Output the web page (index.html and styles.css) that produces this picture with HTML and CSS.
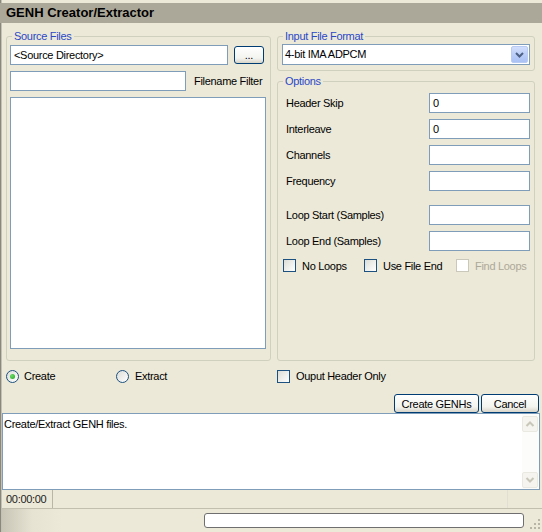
FILE: index.html
```html
<!DOCTYPE html>
<html>
<head>
<meta charset="utf-8">
<title>GENH Creator/Extractor</title>
<link rel="stylesheet" href="styles.css">
</head>
<body>
<div class="window">
  <div class="topstrip"></div>
  <div class="titlebar">GENH Creator/Extractor</div>

  <div class="main">
    <fieldset class="group src">
      <legend>Source Files</legend>
      <div class="src-body">
        <div class="row r1">
          <div class="textbox dir">&lt;Source Directory&gt;</div>
          <div class="btn browse">...</div>
        </div>
        <div class="row r2">
          <div class="textbox filter"></div>
          <span class="lbl">Filename Filter</span>
        </div>
        <div class="listbox"></div>
      </div>
    </fieldset>

    <div class="rightcol">
      <fieldset class="group fmt">
        <legend>Input File Format</legend>
        <div class="fmt-body">
          <div class="combo">
            <span class="combo-text">4-bit IMA ADPCM</span>
            <span class="combo-btn">
              <svg width="15" height="15" viewBox="0 0 15 15"><path d="M4 6 L7.5 9.5 L11 6" fill="none" stroke="#4D6185" stroke-width="2"/></svg>
            </span>
          </div>
        </div>
      </fieldset>

      <fieldset class="group opts">
        <legend>Options</legend>
        <div class="opts-body">
          <div class="orow"><span>Header Skip</span><div class="textbox num">0</div></div>
          <div class="orow"><span>Interleave</span><div class="textbox num">0</div></div>
          <div class="orow"><span>Channels</span><div class="textbox num"></div></div>
          <div class="orow"><span>Frequency</span><div class="textbox num"></div></div>
          <div class="orow sep"><span>Loop Start (Samples)</span><div class="textbox num"></div></div>
          <div class="orow"><span>Loop End (Samples)</span><div class="textbox num"></div></div>
          <div class="checks">
            <div class="citem c1"><span class="chk"></span><span>No Loops</span></div>
            <div class="citem c2"><span class="chk"></span><span>Use File End</span></div>
            <div class="citem c3 disabled"><span class="chk off"></span><span>Find Loops</span></div>
          </div>
        </div>
      </fieldset>
    </div>
  </div>

  <div class="moderow">
    <div class="ritem create"><span class="radio on"></span><span>Create</span></div>
    <div class="ritem extract"><span class="radio"></span><span>Extract</span></div>
    <div class="ritem header"><span class="chk"></span><span>Ouput Header Only</span></div>
  </div>

  <div class="btnrow">
    <div class="btn create-btn">Create GENHs</div>
    <div class="btn cancel-btn">Cancel</div>
  </div>

  <div class="log">
    <div class="log-text">Create/Extract GENH files.</div>
    <div class="vscroll">
      <div class="sbtn">
        <svg width="10" height="8" viewBox="0 0 10 8"><path d="M1.5 6 L5 2.5 L8.5 6" fill="none" stroke="#C9C7BA" stroke-width="2"/></svg>
      </div>
      <div class="strack"></div>
      <div class="sbtn">
        <svg width="10" height="8" viewBox="0 0 10 8"><path d="M1.5 2 L5 5.5 L8.5 2" fill="none" stroke="#C9C7BA" stroke-width="2"/></svg>
      </div>
    </div>
  </div>

  <div class="status">
    <div class="panel time">00:00:00</div>
    <div class="panel rest"></div>
  </div>

  <div class="bottombar">
    <div class="progress"></div>
    <svg class="grip" width="12" height="12" viewBox="0 0 12 12">
      <rect x="9" y="1" width="2" height="2" fill="#B8B5A6"/>
      <rect x="5" y="5" width="2" height="2" fill="#B8B5A6"/>
      <rect x="9" y="5" width="2" height="2" fill="#B8B5A6"/>
      <rect x="1" y="9" width="2" height="2" fill="#B8B5A6"/>
      <rect x="5" y="9" width="2" height="2" fill="#B8B5A6"/>
      <rect x="9" y="9" width="2" height="2" fill="#B8B5A6"/>
    </svg>
  </div>
</div>
</body>
</html>
```

FILE: styles.css
```css
* { box-sizing: border-box; }
html, body { margin: 0; padding: 0; }
body {
  background: #ECE9D8;
  font-family: "Liberation Sans", Arial, sans-serif;
  font-size: 11px;
  letter-spacing: -0.3px;
  color: #000;
}
.window {
  width: 542px;
  height: 532px;
  overflow: hidden;
  background: #ECE9D8;
  padding-left: 2px;
  box-shadow: inset 1px 0 #8A887C, inset 2px 0 #C4C1B2;
  display: flex;
  flex-direction: column;
}
.topstrip { height: 3px; flex: none; }
.titlebar {
  height: 20px;
  flex: none;
  margin-left: -2px;
  background: #ACA899;
  padding-left: 6px;
  font-weight: bold;
  font-size: 13px;
  line-height: 19px;
  letter-spacing: 0;
}

/* group boxes */
.main {
  display: flex;
  gap: 6px;
  margin-top: 7px;
  padding-left: 4px;
  height: 331px;
  flex: none;
}
.group {
  margin: 0;
  padding: 0;
  border: 1px solid #D0D0BF;
  border-radius: 3px;
  min-width: 0;
}
.group legend {
  margin-left: 5px;
  padding: 0 2px;
  line-height: 13px;
  height: 13px;
  color: #2A48C6;
}
.src { width: 265px; height: 331px; }
.src-body { padding: 2px 0 0 3px; display: flex; flex-direction: column; }
.row { display: flex; align-items: center; }
.r1 { height: 20px; }
.r2 { height: 20px; margin-top: 6px; }
.textbox {
  background: #fff;
  border: 1px solid #7F9DB9;
  height: 20px;
  padding: 0 3px;
  line-height: 18px;
  white-space: nowrap;
}
.dir { width: 218px; }
.browse { width: 30px; height: 18px; margin-left: 6px; }
.filter { width: 176px; }
.lbl { margin-left: 8px; }
.listbox {
  width: 256px;
  height: 252px;
  margin-top: 6px;
  background: #fff;
  border: 1px solid #7F9DB9;
}

.rightcol { width: 258px; display: flex; flex-direction: column; gap: 4px; }
.fmt { height: 41px; }
.fmt-body { padding: 1px 0 0 4px; }
.combo {
  width: 248px;
  height: 21px;
  background: #fff;
  border: 1px solid #7F9DB9;
  display: flex;
  align-items: center;
  justify-content: space-between;
  padding: 1px 1px 1px 2px;
}
.combo-text { line-height: 17px; }
.combo-btn {
  width: 17px;
  height: 17px;
  border: 1px solid #B9CBF3;
  border-radius: 2px;
  background: linear-gradient(#D2DEFC, #B7CBF7 60%, #A9C1F4);
  display: flex;
  align-items: center;
  justify-content: center;
}
.opts { height: 286px; }
.opts-body { padding: 5px 4px 0 8px; display: flex; flex-direction: column; }
.orow {
  height: 20px;
  display: flex;
  align-items: center;
  justify-content: space-between;
  margin-bottom: 6px;
}
.orow.sep { margin-top: 8px; }
.num { width: 101px; }
.checks { display: flex; align-items: center; height: 13px; margin-top: 2px; margin-left: -3px; }
.citem { display: flex; align-items: center; gap: 6px; }
.c1 { width: 81px; }
.c2 { width: 92px; }
.disabled { color: #ACA899; }

.chk {
  width: 13px;
  height: 13px;
  flex: none;
  border: 1px solid #1C5180;
  background: linear-gradient(135deg, #DCDCD7, #FFFFFF);
}
.chk.off { border-color: #CAC8BB; background: #fff; }
.radio {
  width: 13px;
  height: 13px;
  flex: none;
  border-radius: 50%;
  border: 1px solid #1C5180;
  background: linear-gradient(135deg, #DCDCD7, #FFFFFF);
  display: flex;
  align-items: center;
  justify-content: center;
}
.radio.on::after {
  content: "";
  width: 5px;
  height: 5px;
  border-radius: 50%;
  background: radial-gradient(circle at 35% 35%, #6BDD66, #21A121);
}

.moderow {
  display: flex;
  align-items: center;
  height: 14px;
  margin-top: 8px;
  padding-left: 4px;
  flex: none;
}
.ritem { display: flex; align-items: center; gap: 5px; }
.create { width: 110px; }
.extract { width: 161px; gap: 6px; }
.header { gap: 6px; }

.btnrow {
  display: flex;
  justify-content: flex-end;
  gap: 2px;
  margin-top: 11px;
  padding-right: 3px;
  height: 19px;
  flex: none;
}
.btn {
  border: 1px solid #003C74;
  border-radius: 3px;
  background: linear-gradient(#FFFFFF, #F3F3EF 70%, #D8D4C8);
  display: flex;
  align-items: center;
  justify-content: center;
  white-space: nowrap;
}
.create-btn { width: 85px; height: 19px; }
.cancel-btn { width: 58px; height: 19px; }

.log {
  width: 538px;
  height: 77px;
  flex: none;
  background: #fff;
  border: 1px solid #7F9DB9;
  display: flex;
}
.log-text { flex: 1; padding: 4px 0 0 1px; line-height: 13px; }
.vscroll {
  width: 17px;
  padding: 2px 1px 1px 0;
  display: flex;
  flex-direction: column;
  background: #FCFCFA;
}
.sbtn {
  width: 16px;
  height: 16px;
  border: 1px solid #EAE9E1;
  border-radius: 2px;
  background: #F5F4EF;
  display: flex;
  align-items: center;
  justify-content: center;
}
.strack { flex: 1; }

.status {
  height: 18px;
  flex: none;
  display: flex;
  border-bottom: 1px solid #C2BFAF;
  height: 19px;
}
.panel { height: 18px; line-height: 18px; }
.time { width: 51px; padding-left: 4px; border-right: 1px solid #B9B6A6; color: #222; }
.rest { width: 455px; border-right: 1px solid #E2DFD0; }

.bottombar {
  height: 23px;
  flex: none;
  display: flex;
  align-items: flex-start;
  background: linear-gradient(to right, #C8C5B6, #E6E3D3 30px, #ECE9D8 60px);
}
.progress {
  margin-left: 202px;
  margin-top: 4px;
  width: 320px;
  height: 15px;
  background: #fff;
  border: 1px solid #6F6F6F;
  border-radius: 3px;
}
.grip { margin-left: 5px; margin-top: 9px; }
```
